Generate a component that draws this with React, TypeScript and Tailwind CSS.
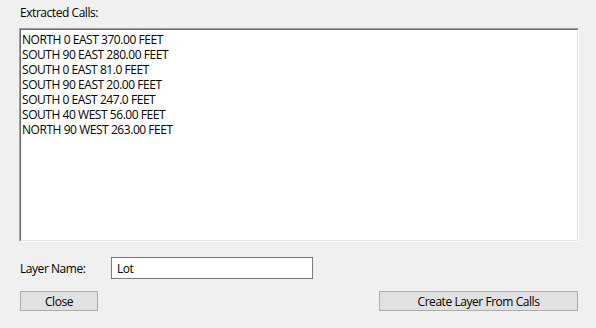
import React from "react";

const calls = [
  "NORTH 0 EAST 370.00 FEET",
  "SOUTH 90 EAST 280.00 FEET",
  "SOUTH 0 EAST 81.0 FEET",
  "SOUTH 90 EAST 20.00 FEET",
  "SOUTH 0 EAST 247.0 FEET",
  "SOUTH 40 WEST 56.00 FEET",
  "NORTH 90 WEST 263.00 FEET",
];

export default function App() {
  return (
    <div
      className="w-[596px] h-[328px] bg-[#f0f0f0] text-black text-[12px] leading-[15px] tracking-[-0.45px] flex flex-col pl-[19px] pr-[17px]"
      style={{ fontFamily: '"Segoe UI", "Open Sans", "Liberation Sans", sans-serif' }}
    >
      <div className="pt-[5px] h-[28px] pl-[1px]">Extracted Calls:</div>
      <div className="h-[214px] border border-t-[#a0a0a0] border-l-[#a0a0a0] border-r-white border-b-white">
        <div className="h-full border border-t-[#696969] border-l-[#696969] border-r-[#e3e3e3] border-b-[#e3e3e3] bg-white pl-[1px] pt-[2px]">
          {calls.map((c) => (
            <div key={c} className="whitespace-nowrap">{c}</div>
          ))}
        </div>
      </div>
      <div className="flex items-center mt-[15px] h-[22px]">
        <div className="w-[92px] pl-[1px]">Layer Name:</div>
        <div className="w-[202px] h-[22px] border border-[#7a7a7a] bg-white flex items-center pl-[5px]">Lot</div>
      </div>
      <div className="flex justify-between mt-[12px] pl-[1px] mr-[1px]">
        <div className="w-[78px] h-[20px] border border-[#adadad] bg-[#e1e1e1] flex items-center justify-center">Close</div>
        <div className="w-[199px] h-[20px] border border-[#adadad] bg-[#e1e1e1] flex items-center justify-center">Create Layer From Calls</div>
      </div>
    </div>
  );
}
